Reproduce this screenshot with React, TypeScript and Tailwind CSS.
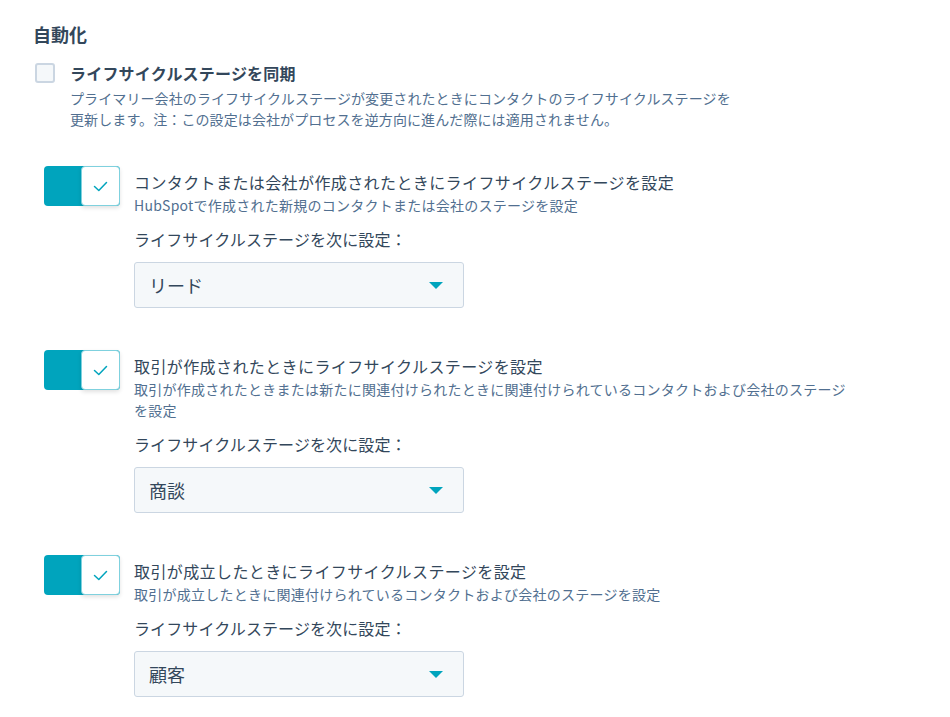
import React from "react";

const font = { fontFamily: '"Noto Sans CJK JP", "Noto Sans", sans-serif' };

function Toggle() {
  return (
    <div className="relative w-[76px] h-[40px] shrink-0">
      <div className="absolute inset-0 rounded-[4px] bg-[#00a4bd]" />
      <div className="absolute right-0 top-0 w-[39px] h-[40px] rounded-[4px] bg-white border border-[#7fd1de] shadow-[0_2px_4px_rgba(0,0,0,0.12)] flex items-center justify-center">
        <svg width="15" height="11" viewBox="0 0 15 11" fill="none">
          <path d="M1.5 5.5 L5.8 9.5 L13.5 1.5" stroke="#00a4bd" strokeWidth="1.5" strokeLinecap="round" strokeLinejoin="round" />
        </svg>
      </div>
    </div>
  );
}

function Select({ value }: { value: string }) {
  return (
    <div className="w-[330px] h-[46px] mt-[11px] rounded-[3px] border border-[#cbd6e2] bg-[#f5f8fa] flex items-center justify-between pl-[14px] pr-[20px]">
      <span className="text-[18px] text-[#33475b]">{value}</span>
      <svg width="14" height="7" viewBox="0 0 14 7">
        <path d="M0 0 H14 L7 7 Z" fill="#00a4bd" />
      </svg>
    </div>
  );
}

function Section({ title, sub, value }: { title: string; sub: string; value: string }) {
  return (
    <div className="flex gap-[14px] pl-[11px]">
      <Toggle />
      <div className="flex flex-col pt-[4px]">
        <div className="text-[16px] leading-[24px] text-[#33475b] tracking-[0.4px]">{title}</div>
        <div className="text-[14px] leading-[21px] text-[#516f90] max-w-[720px] tracking-[0.25px] mt-[1px]">{sub}</div>
        <div className="text-[16px] leading-[24px] text-[#33475b] mt-[11px] tracking-[0.1px]">ライフサイクルステージを次に設定：</div>
        <Select value={value} />
      </div>
    </div>
  );
}

export default function App() {
  return (
    <div className="w-[950px] h-[717px] bg-white overflow-hidden pl-[33px] pt-[22px]" style={font}>
      <div className="text-[18px] leading-[24px] font-bold text-[#33475b]">自動化</div>
      <div className="flex gap-[15px] mt-[16px] pl-[2px]">
        <div className="w-[20px] h-[20px] mt-[1px] rounded-[3px] border-2 border-[#cbd6e2] bg-[#f5f8fa] shrink-0" />
        <div className="flex flex-col">
          <div className="text-[16px] leading-[22px] font-bold text-[#33475b] tracking-[0.2px]">ライフサイクルステージを同期</div>
          <div className="text-[14px] leading-[21px] text-[#516f90] mt-[4px] tracking-[0.1px]">
            プライマリー会社のライフサイクルステージが変更されたときにコンタクトのライフサイクルステージを
            <br />
            更新します。注：この設定は会社がプロセスを逆方向に進んだ際には適用されません。
          </div>
        </div>
      </div>
      <div className="flex flex-col gap-[42px] mt-[36px]">
        <Section
          title="コンタクトまたは会社が作成されたときにライフサイクルステージを設定"
          sub="HubSpotで作成された新規のコンタクトまたは会社のステージを設定"
          value="リード"
        />
        <Section
          title="取引が作成されたときにライフサイクルステージを設定"
          sub="取引が作成されたときまたは新たに関連付けられたときに関連付けられているコンタクトおよび会社のステージを設定"
          value="商談"
        />
        <Section
          title="取引が成立したときにライフサイクルステージを設定"
          sub="取引が成立したときに関連付けられているコンタクトおよび会社のステージを設定"
          value="顧客"
        />
      </div>
    </div>
  );
}
